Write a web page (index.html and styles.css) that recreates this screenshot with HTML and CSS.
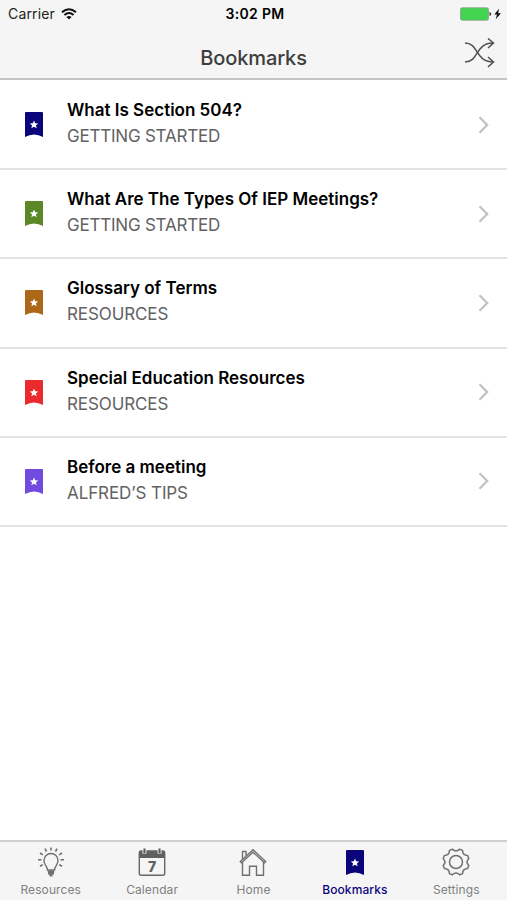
FILE: index.html
```html
<!DOCTYPE html>
<html lang="en">
<head>
    <meta charset="UTF-8">
    <meta name="viewport" content="width=device-width, initial-scale=1.0">
    <title>Bookmarks</title>
    <link rel="stylesheet" href="styles.css">
</head>
<body>
    <!-- Shared icons -->
    <svg class="sprite" aria-hidden="true">
        <symbol id="ribbon" viewBox="0 0 18 25">
            <path fill="currentColor" d="M1 0H17Q18 0 18 1V25Q9 20 0 25V1Q0 0 1 0Z"/>
            <path fill="#fff" d="M9 8.5L10.2 11.3L13.2 11.5L10.9 13.4L11.7 16.3L9 14.7L6.3 16.3L7.1 13.4L4.8 11.5L7.8 11.3Z"/>
        </symbol>
        <symbol id="chevron" viewBox="0 0 11 18">
            <path d="M1.5 1.2L9.2 9L1.5 16.8" fill="none" stroke="#c2c2c4" stroke-width="2.3"/>
        </symbol>
    </svg>

    <div class="app">
        <header class="header">
            <div class="status-bar">
                <div class="carrier">
                    <span class="carrier-name">Carrier</span>
                    <svg class="wifi" viewBox="0 0 16 12" fill="none" stroke="#111" stroke-width="2">
                        <path d="M1 4.3Q8 -1.8 15 4.3"/>
                        <path d="M3.4 7Q8 3.1 12.6 7"/>
                        <path d="M8 11.5L5.4 8.9Q8 6.9 10.6 8.9Z" fill="#111" stroke="none"/>
                    </svg>
                </div>
                <span class="time">3:02 PM</span>
                <svg class="battery" viewBox="0 0 42 14">
                    <rect x="0.5" y="0.8" width="28" height="12.4" rx="1.6" fill="#43d551" stroke="#8c9a8d" stroke-width="0.8"/>
                    <path d="M29.5 5Q31.3 5.3 31.3 7T29.5 9Z" fill="#333"/>
                    <path d="M39 1.7L34.3 7.5H37L35.7 12.3L41 6.2H38.2Z" fill="#111"/>
                </svg>
            </div>
            <div class="nav-bar">
                <h1 class="title">Bookmarks</h1>
                <svg class="shuffle" viewBox="0 0 32 30" fill="none" stroke="#505050" stroke-width="1.5">
                    <path d="M1 5C15 5 11 24 29 24"/>
                    <path d="M1 24C15 24 11 5 29 5"/>
                    <path d="M24 .5L29.5 5L24 10M24 19L29.5 24L24 29"/>
                </svg>
            </div>
        </header>

        <main class="list">
            <a class="row">
                <svg class="ribbon navy"><use href="#ribbon"/></svg>
                <div class="row-text">
                    <div class="row-title">What Is Section 504?</div>
                    <div class="row-category tight">GETTING STARTED</div>
                </div>
                <svg class="chevron"><use href="#chevron"/></svg>
            </a>
            <a class="row">
                <svg class="ribbon green"><use href="#ribbon"/></svg>
                <div class="row-text">
                    <div class="row-title">What Are The Types Of IEP Meetings?</div>
                    <div class="row-category tight">GETTING STARTED</div>
                </div>
                <svg class="chevron"><use href="#chevron"/></svg>
            </a>
            <a class="row">
                <svg class="ribbon brown"><use href="#ribbon"/></svg>
                <div class="row-text">
                    <div class="row-title">Glossary of Terms</div>
                    <div class="row-category">RESOURCES</div>
                </div>
                <svg class="chevron"><use href="#chevron"/></svg>
            </a>
            <a class="row">
                <svg class="ribbon red"><use href="#ribbon"/></svg>
                <div class="row-text">
                    <div class="row-title">Special Education Resources</div>
                    <div class="row-category">RESOURCES</div>
                </div>
                <svg class="chevron"><use href="#chevron"/></svg>
            </a>
            <a class="row">
                <svg class="ribbon purple"><use href="#ribbon"/></svg>
                <div class="row-text">
                    <div class="row-title">Before a meeting</div>
                    <div class="row-category">ALFRED’S TIPS</div>
                </div>
                <svg class="chevron"><use href="#chevron"/></svg>
            </a>
        </main>

        <nav class="tab-bar">
            <a class="tab">
                <svg class="tab-icon" viewBox="0 0 32 32" fill="none" stroke="#707070" stroke-width="1.4">
                    <path d="M12.5 24C12.5 20.5 9 19 9 14.5A7 7 0 0 1 23 14.5C23 19 19.5 20.5 19.5 24Z"/>
                    <path d="M12.700 25.5H19.300M13 27.5H19M14.5 29.5H17.5" stroke-width="1.9"/>
                    <path d="M16 1.500V4.500M10 2.700L11.500 5.500M22 2.700L20.500 5.500M5 7L7.800 8.800M27 7L24.200 8.800M3 13.700H6.500M29 13.700H25.500M5 20.300L7.800 18.600M27 20.300L24.200 18.600" stroke-width="1.600"/>
                </svg>
                <span class="tab-label">Resources</span>
            </a>
            <a class="tab">
                <svg class="tab-icon" viewBox="0 0 32 32">
                    <rect x="3.3" y="5.3" width="25.4" height="24" rx="2" fill="none" stroke="#666" stroke-width="1.4"/>
                    <path d="M3 12V6Q3 4.5 4.500 4.500H27.500Q29 4.500 29 6V12Z" fill="#606060"/>
                    <path d="M8.500 2.500V7.500M23.500 2.500V7.500" stroke="#f5f5f5" stroke-width="4"/>
                    <path d="M8.500 2.500V7M23.500 2.500V7" stroke="#606060" stroke-width="2.200"/>
                    <text x="16" y="26" class="calendar-day">7</text>
                </svg>
                <span class="tab-label">Calendar</span>
            </a>
            <a class="tab">
                <svg class="tab-icon" viewBox="0 0 32 32" fill="none" stroke="#707070" stroke-width="1.400">
                    <path d="M3.300 15.500L16 3.700L28.700 15.500L27.500 16.800L16 6.200L4.500 16.800Z"/>
                    <path d="M5.500 16V29.300H12.500V20.300H19.500V29.300H26.500V16M5.500 13V5.500H9V9.700"/>
                </svg>
                <span class="tab-label">Home</span>
            </a>
            <a class="tab active">
                <svg class="tab-icon" viewBox="0 0 32 32"><use href="#ribbon" x="7" y="4" width="18" height="25"/></svg>
                <span class="tab-label">Bookmarks</span>
            </a>
            <a class="tab">
                <svg class="tab-icon" viewBox="0 0 32 32" fill="none" stroke="#707070" stroke-width="1.5" stroke-linejoin="round">
                    <path d="M28.8 12.450Q25.300 16 28.800 19.550L27.600 22.550Q22.700 22.700 22.550 27.600L19.550 28.800Q16 25.300 12.450 28.800L9.450 27.600Q9.300 22.700 4.400 22.550L3.200 19.550Q6.700 16 3.200 12.450L4.400 9.450Q9.300 9.300 9.450 4.400L12.450 3.200Q16 6.700 19.550 3.200L22.550 4.400Q22.700 9.300 27.600 9.450Z"/>
                    <circle cx="16" cy="16" r="6.500"/>
                </svg>
                <span class="tab-label">Settings</span>
            </a>
        </nav>
    </div>
</body>
</html>
```
FILE: styles.css
```css
* {
    box-sizing: border-box;
}
body {
    margin: 0;
    font-family: Inter, "Liberation Sans", sans-serif;
    background-color: #fff;
    color: #000;
}
.sprite {
    display: none;
}
.app {
    display: flex;
    flex-direction: column;
    height: 900px;
}
.header {
    height: 80px;
    background-color: #f5f5f5;
    border-bottom: 2px solid #c3c3c3;
}
.status-bar {
    display: grid;
    grid-template-columns: 1fr auto 1fr;
    align-items: center;
    height: 27px;
    padding: 0 5px 0 8px;
}
.carrier {
    display: flex;
    align-items: center;
    gap: 6px;
    color: #222;
}
.carrier-name {
    font-size: 14px;
    letter-spacing: 0.15px;
}
.wifi {
    width: 16px;
    height: 12px;
}
.time {
    font-weight: 600;
    font-size: 14px;
    letter-spacing: 0.3px;
}
.battery {
    width: 42px;
    height: 14px;
    justify-self: end;
}
.nav-bar {
    display: grid;
    grid-template-columns: 1fr auto 1fr;
    height: 51px;
    padding: 11px 11px 0 11px;
}
.title {
    grid-column: 2;
    margin: 8px 0 0;
    font-size: 20px;
    font-weight: 500;
    line-height: 24px;
    letter-spacing: -0.1px;
    color: #3d3d3d;
}
.shuffle {
    width: 32px;
    height: 30px;
    justify-self: end;
}
.list {
    flex: 1;
    padding-top: 1px;
}
.row {
    display: flex;
    align-items: center;
    height: 89.2px;
    padding: 0 18px 0 25px;
    border-bottom: 2px solid #e2e2e2;
}
.ribbon {
    width: 18px;
    height: 25px;
}
.navy {
    color: #0b057c;
}
.green {
    color: #5c8727;
}
.brown {
    color: #ad6718;
}
.red {
    color: #ea2a2d;
}
.purple {
    color: #714be0;
}
.row-text {
    flex: 1;
    margin-left: 24px;
    padding-bottom: 2px;
    white-space: nowrap;
}
.row-title {
    font-size: 17px;
    font-weight: 600;
    line-height: 26px;
}
.row-category {
    font-size: 17px;
    line-height: 27px;
    letter-spacing: -0.1px;
    color: #626262;
}
.tight {
    letter-spacing: -0.22px;
}
.chevron {
    width: 11px;
    height: 18px;
}
.tab-bar {
    display: grid;
    grid-template-columns: repeat(5, 1fr);
    height: 60px;
    background-color: #f5f5f5;
    border-top: 2px solid #cfcfcf;
}
.tab {
    display: flex;
    flex-direction: column;
    align-items: center;
    padding-top: 4px;
    color: #808080;
}
.tab-icon {
    width: 32px;
    height: 32px;
}
.tab-label {
    margin-top: 3px;
    font-size: 12px;
    line-height: 18px;
    letter-spacing: 0.1px;
}
.active {
    color: #0b057c;
}
.active .tab-label {
    font-weight: 500;
}
.calendar-day {
    font-size: 14px;
    font-weight: 800;
    text-anchor: middle;
    fill: #606060;
}
```
